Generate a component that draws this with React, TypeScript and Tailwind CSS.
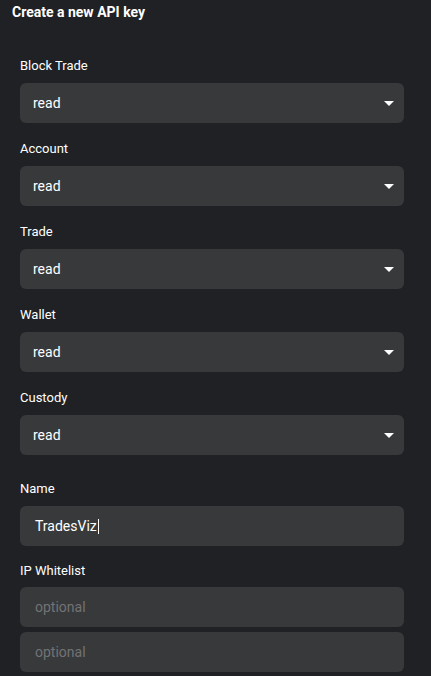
const PERMS = ['Block Trade', 'Account', 'Trade', 'Wallet', 'Custody'] as const;

function Caret() {
  return (
    <svg width="10" height="5" viewBox="0 0 10 5" className="shrink-0">
      <path d="M0 0h10L5 5z" fill="#ffffff" />
    </svg>
  );
}

function Field({ label, children }: { label: string; children: React.ReactNode }) {
  return (
    <div className="flex flex-col">
      <label className="h-[19px] text-[13px] leading-[19px] text-white">{label}</label>
      <div className="mt-[8px]">{children}</div>
    </div>
  );
}

export default function App() {
  return (
    <div
      className="min-h-[676px] w-[431px] bg-[#202124] text-white"
      style={{ fontFamily: 'Roboto, "Noto Sans", sans-serif' }}
    >
      <h1 className="px-3 pt-[4px] text-[14px] font-bold leading-[16px]">Create a new API key</h1>

      <div className="mt-[36px] flex flex-col pl-5 pr-[27px]">
        <div className="flex flex-col gap-[16px]">
          {PERMS.map((p) => (
            <Field key={p} label={p}>
              <div className="flex h-10 items-center justify-between rounded-md bg-[#38393b] pl-[13px] pr-[10px]">
                <span className="text-[14px]">read</span>
                <Caret />
              </div>
            </Field>
          ))}
        </div>

        <div className="mt-[24px] flex flex-col gap-[15px]">
          <Field label="Name">
            <div className="flex h-10 items-center rounded-md bg-[#38393b] px-[15px] text-[14px]">
              TradesViz<span className="ml-px h-[15px] w-px bg-white" />
            </div>
          </Field>

          <Field label="IP Whitelist">
            <div className="-mt-[1px] flex flex-col gap-[5px]">
              <div className="flex h-10 items-center rounded-md bg-[#38393b] px-[15px] text-[14px] text-[#727375]">
                optional
              </div>
              <div className="flex h-10 items-center rounded-md bg-[#38393b] px-[15px] text-[14px] text-[#727375]">
                optional
              </div>
            </div>
          </Field>
        </div>
      </div>
    </div>
  );
}
